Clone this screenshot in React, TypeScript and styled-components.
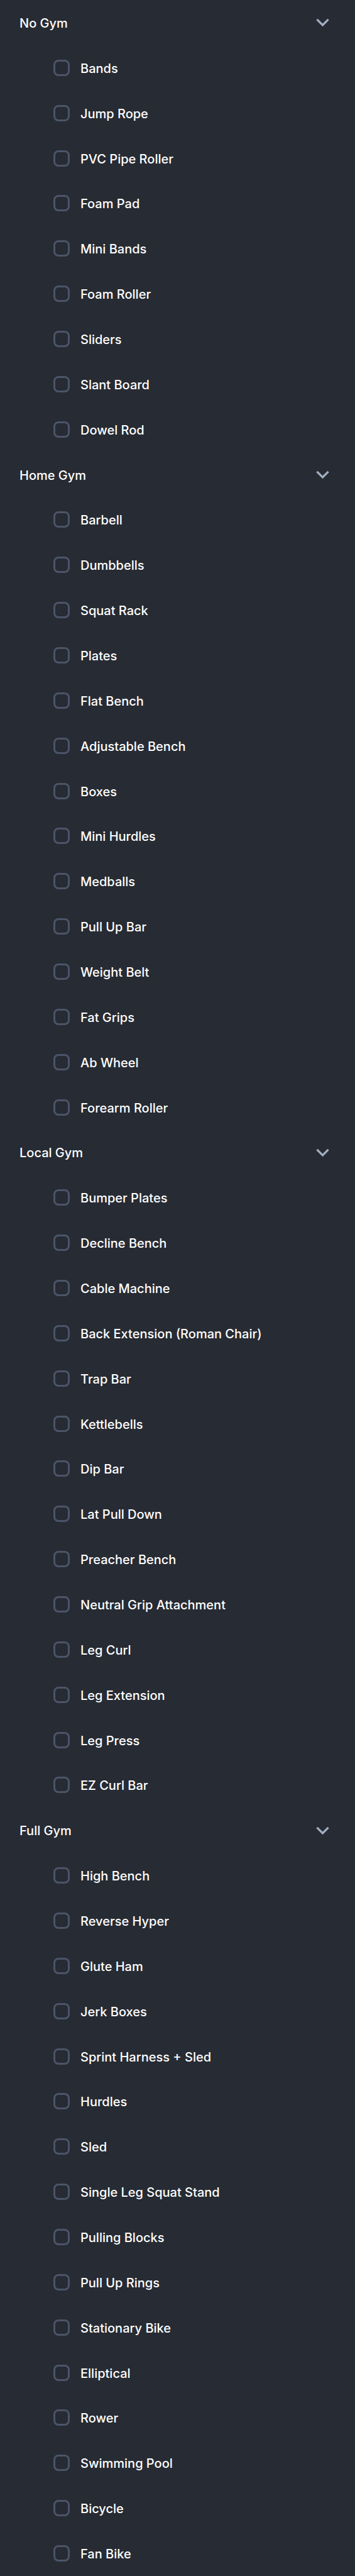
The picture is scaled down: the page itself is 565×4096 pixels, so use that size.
import React, { useState } from "react";
import styled, { createGlobalStyle } from "styled-components";

const GlobalStyle = createGlobalStyle`
  *, *::before, *::after { box-sizing: border-box; }
  body {
    margin: 0;
    background: #272b33;
    color: #ffffff;
    font-family: Inter, "Liberation Sans", sans-serif;
    font-size: 20px;
    line-height: 28px;
    font-weight: 500;
  }
`;

const Page = styled.main`
  display: flex;
  flex-direction: column;
  min-height: 100vh;
`;

/* Sections share the page height by the number of rows each one shows. */
const Section = styled.section<{ $rows: number }>`
  flex: ${(p) => p.$rows} 0 auto;
  flex-basis: 0;
  display: grid;
  grid-auto-rows: minmax(56px, 1fr);
`;

const Heading = styled.h2`
  margin: 0;
  font: inherit;
  display: grid;
`;

const Toggle = styled.button`
  display: flex;
  align-items: center;
  justify-content: space-between;
  padding: 0 31px;
  border: 0;
  background: none;
  color: inherit;
  font: inherit;
  text-align: left;
  cursor: pointer;
`;

const Text = styled.span`
  padding-top: 2px;
`;

const Chevron = styled.svg<{ $open: boolean }>`
  width: 41px;
  height: 41px;
  fill: #a0aec0;
  transform: ${(p) => (p.$open ? "none" : "rotate(-90deg)")};
`;

const Option = styled.label`
  display: flex;
  align-items: center;
  gap: 17px;
  padding: 0 31px 0 85px;
  cursor: pointer;
`;

const Box = styled.input`
  appearance: none;
  flex: none;
  width: 26px;
  height: 26px;
  margin: 0;
  border: 3px solid #4a5568;
  border-radius: 8px;
  cursor: pointer;

  &:checked {
    background: #4a5568;
  }
`;

const groups = [
  {
    name: "No Gym",
    items: ["Bands", "Jump Rope", "PVC Pipe Roller", "Foam Pad", "Mini Bands", "Foam Roller", "Sliders", "Slant Board", "Dowel Rod"],
  },
  {
    name: "Home Gym",
    items: ["Barbell", "Dumbbells", "Squat Rack", "Plates", "Flat Bench", "Adjustable Bench", "Boxes", "Mini Hurdles", "Medballs", "Pull Up Bar", "Weight Belt", "Fat Grips", "Ab Wheel", "Forearm Roller"],
  },
  {
    name: "Local Gym",
    items: ["Bumper Plates", "Decline Bench", "Cable Machine", "Back Extension (Roman Chair)", "Trap Bar", "Kettlebells", "Dip Bar", "Lat Pull Down", "Preacher Bench", "Neutral Grip Attachment", "Leg Curl", "Leg Extension", "Leg Press", "EZ Curl Bar"],
  },
  {
    name: "Full Gym",
    items: ["High Bench", "Reverse Hyper", "Glute Ham", "Jerk Boxes", "Sprint Harness + Sled", "Hurdles", "Sled", "Single Leg Squat Stand", "Pulling Blocks", "Pull Up Rings", "Stationary Bike", "Elliptical", "Rower", "Swimming Pool", "Bicycle", "Fan Bike"],
  },
];

function Group({ name, items }: { name: string; items: string[] }) {
  const [open, setOpen] = useState(true);
  return (
    <Section $rows={open ? items.length + 1 : 1}>
      <Heading>
        <Toggle type="button" aria-expanded={open} onClick={() => setOpen(!open)}>
          <Text>{name}</Text>
          <Chevron $open={open} viewBox="0 0 24 24" aria-hidden="true">
            <path d="M16.59 8.59 12 13.17 7.41 8.59 6 10l6 6 6-6z" />
          </Chevron>
        </Toggle>
      </Heading>
      {open &&
        items.map((item) => (
          <Option key={item}>
            <Box type="checkbox" name={item} />
            <Text>{item}</Text>
          </Option>
        ))}
    </Section>
  );
}

export default function App() {
  return (
    <>
      <GlobalStyle />
      <Page>
        {groups.map((group) => (
          <Group key={group.name} {...group} />
        ))}
      </Page>
    </>
  );
}
